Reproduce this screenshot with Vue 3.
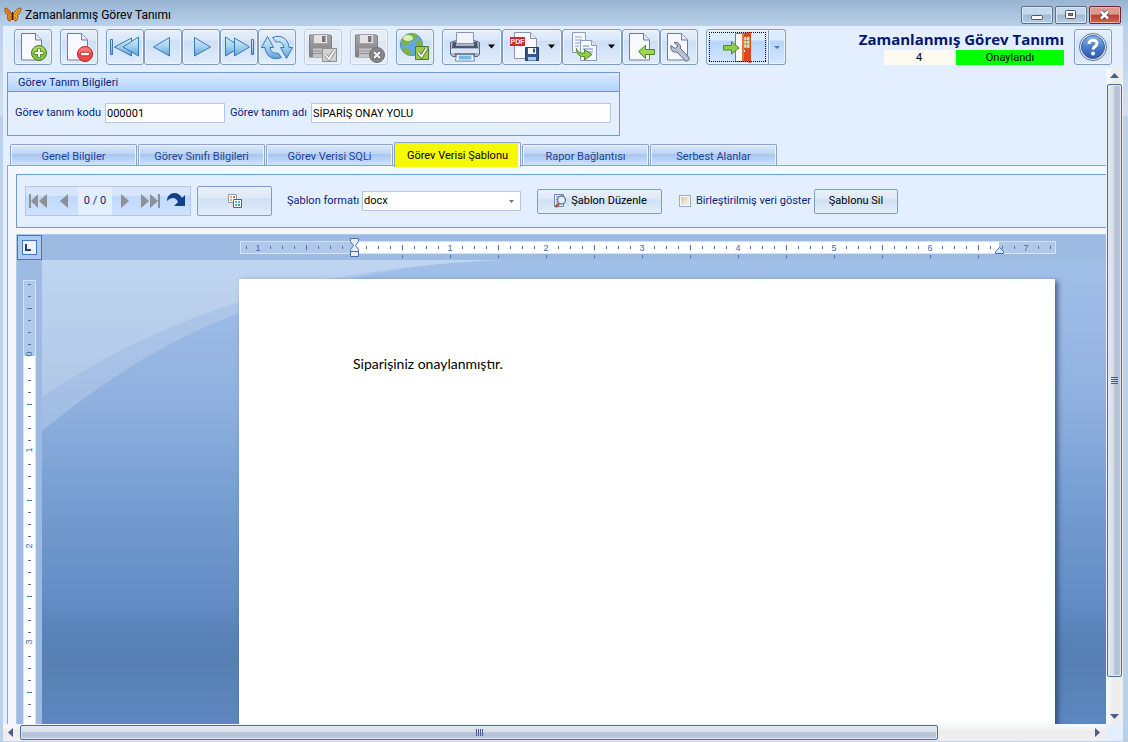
<script setup>
import { ref } from 'vue'

const code = ref('000001')
const name = ref('SİPARİŞ ONAY YOLU')
const format = ref('docx')
const merged = ref(false)
const activeTab = ref(3)

const tabs = [
  'Genel Bilgiler',
  'Görev Sınıfı Bilgileri',
  'Görev Verisi SQLi',
  'Görev Verisi Şablonu',
  'Rapor Bağlantısı',
  'Serbest Alanlar',
]

const groups = [
  [{ id: 'new', label: 'Yeni' }],
  [{ id: 'delete', label: 'Sil' }],
  [
    { id: 'first', label: 'İlk' },
    { id: 'prev', label: 'Önceki' },
    { id: 'next', label: 'Sonraki' },
    { id: 'last', label: 'Son' },
    { id: 'refresh', label: 'Yenile' },
  ],
  [{ id: 'save', label: 'Kaydet', disabled: true }],
  [{ id: 'cancel', label: 'Vazgeç', disabled: true }],
  [{ id: 'web', label: 'Onay' }],
  [
    { id: 'print', label: 'Yazdır', wide: true },
    { id: 'pdf', label: 'PDF kaydet', wide: true },
    { id: 'copy', label: 'Kopyala', wide: true },
    { id: 'import', label: 'Al' },
    { id: 'tools', label: 'Araçlar' },
  ],
]

// Ruler marks: 12 units apart, 96 units per inch, measured from the page margin.
function marks(from, to) {
  const list = []
  for (let i = from; i <= to; i++) {
    list.push({ pos: i * 12, num: i % 8 === 0, half: i % 8 !== 0 && i % 4 === 0, value: Math.abs(i / 8) })
  }
  return list
}
const across = marks(-9, 58).filter((m) => m.pos !== 0)
const below = Array.from({ length: 13 }, (_, i) => (i + 1) * 48)
const down = marks(-6, 31)
</script>

<template>
  <div class="window">
    <header class="titlebar">
      <svg class="logo" viewBox="0 0 18 16" aria-hidden="true">
        <path d="M8 8C6 3 3 1 1 1c-.5 3 .5 6 3 7-1 2-.5 5 1 6 2 0 3-2 3.500-5z" fill="#f08a1c" stroke="#8a3d0a" stroke-width=".8" />
        <path d="M9 8c2-5 5-7 8-7-.2 3-1 6-3.500 7 .8 2 0 5-1.500 6-2 0-2.500-2-3-5z" fill="#f5a52a" stroke="#8a3d0a" stroke-width=".8" />
        <path d="M3 3l3 5M15 3l-4 5M5 12l2-3M12 12l-2-3" stroke="#b3580f" stroke-width=".8" />
        <path d="M8.500 5v8" stroke="#3d2412" stroke-width="1.400" />
      </svg>
      <h1>Zamanlanmış Görev Tanımı</h1>
      <div class="sysbuttons">
        <button type="button" aria-label="Küçült"><svg viewBox="0 0 30 16"><rect x="9.500" y="8.500" width="11" height="4" rx="1" fill="#f8f8f8" stroke="#4d5560" /></svg></button>
        <button type="button" aria-label="Büyüt"><svg viewBox="0 0 30 16"><rect x="9.500" y="3.500" width="10" height="8" rx="1" fill="#f8f8f8" stroke="#4d5560" /><rect x="12.500" y="6.500" width="4" height="2" fill="#7d94b5" stroke="#4d5560" /></svg></button>
        <button type="button" class="close" aria-label="Kapat"><svg viewBox="0 0 30 16"><path d="M11 4.500l7 7M18 4.500l-7 7" stroke="#5a4048" stroke-width="4.400" /><path d="M11 4.500l7 7M18 4.500l-7 7" stroke="#fff" stroke-width="2.600" /></svg></button>
      </div>
    </header>

    <div class="client">
      <div class="toolbar">
        <div class="group" v-for="(g, gi) in groups" :key="gi">
          <button v-for="b in g" :key="b.id" type="button" class="tool" :class="{ wide: b.wide }" :disabled="b.disabled" :aria-label="b.label">
            <svg :viewBox="b.wide ? '1 1 58 34' : '1 1 36 34'">
              <defs v-if="b.id === 'first'">
                <linearGradient id="arrowfill" x1="0" y1="0" x2="0" y2="1"><stop offset="0" stop-color="#d3ecf8" /><stop offset=".5" stop-color="#a3d0ee" /><stop offset="1" stop-color="#5ca3dc" /></linearGradient>
                <linearGradient id="greyfill" x1="0" y1="0" x2="0" y2="1"><stop offset="0" stop-color="#a5a5a7" /><stop offset="1" stop-color="#808083" /></linearGradient>
              </defs>
              <g v-if="['new', 'delete', 'import', 'tools'].includes(b.id)">
                <path d="M7.500 4.500h14l6 6.500v20h-20z" fill="#f8f9ff" stroke="#74799f" />
                <path d="M21.500 4.500v6.500h6" fill="#e4e8f4" stroke="#74799f" />
              </g>
              <g v-if="b.id === 'new'">
                <circle cx="25" cy="24" r="7.500" fill="#86c440" stroke="#447a20" />
                <path d="M18.500 23a6.500 6 0 0 1 13 0z" fill="#b2dd72" opacity=".7" />
                <path d="M25 19.500v9M20.500 24h9" stroke="#4e8424" stroke-width="4" />
                <path d="M25 20v8M21 24h8" stroke="#fff" stroke-width="2.200" />
              </g>
              <g v-else-if="b.id === 'delete'">
                <circle cx="25" cy="25" r="7.500" fill="#f24747" stroke="#b42028" />
                <path d="M18.500 24a6.500 6 0 0 1 13 0z" fill="#fa8a86" opacity=".7" />
                <path d="M20.500 25h9" stroke="#b02a2a" stroke-width="4.500" />
                <path d="M21 25h8" stroke="#fff" stroke-width="2.600" />
              </g>
              <g v-else-if="b.id === 'first'" class="arrow">
                <path d="M4.500 10.500h2v15h-2z" /><path d="M8.500 18L25.500 9v18z" /><path d="M17 18l15.500-10v19z" />
              </g>
              <path v-else-if="b.id === 'prev'" class="arrow" d="M9.500 18L25.500 8.500v18.500z" />
              <path v-else-if="b.id === 'next'" class="arrow" d="M28.500 18L12.500 8.500v18.500z" />
              <g v-else-if="b.id === 'last'" class="arrow">
                <path d="M31.500 10.500h2v15h-2z" /><path d="M20.500 18L5.500 8v19z" /><path d="M29.500 18L14.500 9v18z" />
              </g>
              <g v-else-if="b.id === 'refresh'" class="arrow">
                <path d="M3.500 18.500L9.500 7.500l6 11h-3.500c.5 4 3.500 6.500 8 5.500l3.500 4.500c-8 3.500-16-1-16.500-10z" />
                <path d="M34.500 18.500L28.500 29.500l-6-11H26c-.5-4-3.500-6.500-8-5.500l-3.500-4.500c8-3.500 16 1 16.500 10z" />
              </g>
              <g v-else-if="b.id === 'save' || b.id === 'cancel'">
                <path d="M5.500 6h21l1 1v21h-22z" fill="url(#greyfill)" stroke="#818184" />
                <path d="M9.500 5.500h14v9h-14z" fill="#e3e3e5" stroke="#a2a2a4" />
                <path d="M18 7h3.500v6H18z" fill="#77777a" />
                <path d="M9 19.500h15V28H9z" fill="#c5c5c7" />
                <path d="M9 22h15M9 24.500h15" stroke="#8e8e90" />
                <g v-if="b.id === 'save'">
                  <path d="M18.500 19.500h14v13h-14z" fill="#d2d2d3" stroke="#8f8f91" />
                  <path d="M21.500 26l3.500 4 5-8" fill="none" stroke="#878789" stroke-width="3.400" />
                  <path d="M21.500 26l3.500 4 5-8" fill="none" stroke="#fff" stroke-width="1.800" />
                </g>
                <g v-else>
                  <circle cx="27" cy="26" r="7.500" fill="#87878a" stroke="#727275" />
                  <path d="M23.500 22.500l7 7M30.500 22.500l-7 7" stroke="#666" stroke-width="3.600" />
                  <path d="M24 23l6 6M30 23l-6 6" stroke="#f4f4f4" stroke-width="2.200" />
                </g>
              </g>
              <g v-else-if="b.id === 'web'">
                <circle cx="15.500" cy="15.500" r="11" fill="#62a8df" stroke="#4882b8" />
                <path d="M5 13C6 8 10 4.500 15 4.500c3 0 5 1 7 2.500l-3 4-5 1-2 4-4 1zM21 11l5 1c1 4 0 7-1 9l-5-4zM8 19l6 1 1 6c-4 0-7-2-9-5z" fill="#7cb342" />
                <ellipse cx="12" cy="9" rx="5" ry="3" fill="#f2ffd8" opacity=".8" />
                <path d="M19.500 17.500h13v13h-13z" fill="#9bcb4c" stroke="#4c7a25" />
                <path d="M22 23.500l3.500 4 5-8" fill="none" stroke="#4c6b2c" stroke-width="3.400" />
                <path d="M22 23.500l3.500 4 5-8" fill="none" stroke="#fff" stroke-width="1.800" />
              </g>
              <g v-else-if="b.id === 'print'">
                <path d="M8.500 13.500l5-2h19l5 2v12l-2 2h-25l-2-2z" fill="#a9b6ce" stroke="#57678c" />
                <path d="M11 13h3v4h18v-4h3l1 6H10z" fill="#4b556c" />
                <path d="M14.500 3.500h17v11h-17z" fill="#f0f3fa" stroke="#8b93ad" />
                <path d="M9 20h28v4H9z" fill="#dce3f1" />
                <path d="M13 24.500h20v2H13z" fill="#44506e" />
                <path d="M14.500 25.500h17l1 6.500h-19z" fill="#fff" stroke="#7181a4" />
                <path d="M16.500 26.500h13v4h-13z" fill="#71b9ec" />
              </g>
              <g v-else-if="b.id === 'pdf'">
                <path d="M12.500 3.500h16l6 6v20h-22z" fill="#f8f9ff" stroke="#8b92ad" />
                <path d="M28.500 3.500v6h6" fill="#e4e8f4" stroke="#8b92ad" />
                <path d="M8 8h15v9H8z" fill="#cc2a2e" />
                <text x="15.500" y="15" class="pdf-text">PDF</text>
                <path d="M23.500 18.500h13v13h-13z" fill="#33558c" stroke="#233c69" />
                <path d="M26 19h8v6h-8z" fill="#f4f7fc" /><path d="M31 19.500h2v4h-2z" fill="#33558c" />
                <path d="M26 28h8v3.500h-8z" fill="#a6cdea" />
              </g>
              <g v-else-if="b.id === 'copy'">
                <path d="M10.500 3.500h13v20h-13z" fill="#f6f8ff" stroke="#8b9bc4" />
                <path d="M13 8h7M13 11h7M13 14h7M13 17h4" stroke="#8aa0d4" />
                <path d="M18.500 11.500h11l5 5v15h-16z" fill="#f6f8ff" stroke="#8b9bc4" />
                <path d="M29.500 11.500v5h5" fill="#e0e6f6" stroke="#8b9bc4" />
                <path d="M21 17h6M21 20h10M24 23h7" stroke="#6d84c4" />
                <path d="M14.500 19.500c1 4 4 5 8 4.500v-3.500l7.500 5-7.500 5.500v-3.500c-5 .5-8-2-8-8z" fill="#8fce48" stroke="#4e8a28" />
              </g>
              <path v-else-if="b.id === 'import'" d="M16.500 22.500l7-6v4h9v5h-9v4z" fill="#9ad458" stroke="#4e8a28" />
              <path v-else-if="b.id === 'tools'" d="M14 13.500c4-1 7 2 6.500 6l8 8.500c2 2-1 5.500-3.500 3.500l-8-8.500c-4 1-7-2-6-6.500l4 3 3-2.500z" fill="#b9c2d4" stroke="#596681" />
              <path v-if="b.wide" d="M46 15.500h7l-3.500 4z" fill="#000" />
            </svg>
          </button>
        </div>
        <div class="group">
          <button type="button" class="tool exit" aria-label="Çıkış">
            <svg viewBox="1 1 61 34">
              <path d="M29.500 4.500h9v28h-9z" fill="#fff" stroke="#d85a32" />
              <path d="M36 4l9-1v31l-9-2z" fill="#d9481f" /><path d="M36 4h2v29l-2-1z" fill="#e8703c" />
              <path d="M38 8h5.500v11H38z" fill="#f4e6b8" stroke="#a89a70" stroke-width=".6" />
              <path d="M40.700 8v11M38 11.500h5.500M38 15h5.500" stroke="#8f8766" stroke-width=".8" />
              <path d="M38.500 21v2" stroke="#fff" />
              <path d="M17.500 16.500h8v-4l7.500 6.500-7.500 6v-4h-8z" fill="#8fce48" stroke="#4e8a28" />
              <path d="M3 3.500h57M3 32.500h57M3.500 3v30M59.500 3v30" fill="none" stroke="#000" stroke-dasharray="1 1" />
            </svg>
          </button>
          <button type="button" class="tool drop" aria-label="Çıkış seçenekleri"><svg viewBox="0 0 16 34"><path d="M5 16h6l-3 3z" fill="#4a7bb5" /></svg></button>
        </div>

        <div class="status">
          <h2>Zamanlanmış Görev Tanımı</h2>
          <div class="status-row"><span class="count">4</span><span class="approved">Onaylandı</span></div>
        </div>
        <button type="button" class="tool help" aria-label="Yardım">
          <svg viewBox="1 1 36 34">
            <defs><linearGradient id="helpfill" x1="0" y1="0" x2="0" y2="1"><stop offset="0" stop-color="#8fb5ea" /><stop offset=".5" stop-color="#4b7fcf" /><stop offset="1" stop-color="#2b57a8" /></linearGradient></defs>
            <circle cx="19" cy="18" r="13.500" fill="#e8eefa" stroke="#5d7196" />
            <circle cx="19" cy="18" r="11.500" fill="url(#helpfill)" stroke="#3660a8" />
            <path d="M15 15c0-5 8-5 8-.5 0 3-4 3-4 6" fill="none" stroke="#fff" stroke-width="3" />
            <circle cx="19" cy="24.500" r="2" fill="#fff" />
          </svg>
        </button>
      </div>

      <div class="body">
        <main class="content">
          <section class="info">
            <h3>Görev Tanım Bilgileri</h3>
            <div class="fields">
              <label for="code">Görev tanım kodu</label>
              <input id="code" v-model="code" type="text" class="code" />
              <label for="name">Görev tanım adı</label>
              <input id="name" v-model="name" type="text" class="name" />
            </div>
          </section>

          <nav class="tabs" role="tablist">
            <button v-for="(t, i) in tabs" :key="t" type="button" role="tab" :aria-selected="i === activeTab" :class="{ active: i === activeTab }" @click="activeTab = i">{{ t }}</button>
          </nav>

          <div class="tabpage">
            <div class="panel">
              <div class="navigator">
                <button type="button" aria-label="İlk kayıt"><svg viewBox="0 0 26 28"><path d="M3 7h2v14H3zM12 7v14L5 14zM21 7v14l-8-7z" /></svg></button>
                <button type="button" aria-label="Önceki kayıt"><svg viewBox="0 0 26 28"><path d="M16 7v14l-8-7z" /></svg></button>
                <span>0 / 0</span>
                <button type="button" aria-label="Sonraki kayıt"><svg viewBox="0 0 26 28"><path d="M9 7v14l8-7z" /></svg></button>
                <button type="button" aria-label="Son kayıt"><svg viewBox="0 0 26 28"><path d="M3 7v14l8-7zM12 7v14l8-7zM20 7h2v14h-2z" /></svg></button>
                <button type="button" aria-label="Kayda git"><svg viewBox="0 0 26 28"><path d="M3 14c0-9 11-11 15-3l3-3v11H10l4-4c-2-5-7-5-11-1z" fill="#143f8a" /></svg></button>
              </div>
              <button type="button" class="btn fields-btn" aria-label="Alanlar">
                <svg viewBox="0 0 16 16">
                  <path d="M1.500 1.500h8v8h-8z" fill="#fff" stroke="#8c98bd" /><path d="M3 3h2v2H3z" fill="#f6a93c" /><path d="M6 3h2v2H6z" fill="#ee6a3c" /><path d="M3 6h2v2H3z" fill="#f7b733" />
                  <path d="M6.500 6.500h8v8h-8z" fill="#fff" stroke="#4a62a8" /><path d="M8 8h2v2H8zM11 8h2v2h-2z" fill="#6fa4ee" /><path d="M8 11h2v2H8z" fill="#49b7b0" /><path d="M11 11h2v2h-2z" fill="#58a62c" />
                </svg>
              </button>
              <label for="format" class="format-label">Şablon formatı</label>
              <div class="select">
                <select id="format" v-model="format"><option>docx</option><option>html</option></select>
                <svg viewBox="0 0 5 3" aria-hidden="true"><path d="M0 0h5L2.500 3z" fill="#4a7bb5" /></svg>
              </div>
              <button type="button" class="btn edit">
                <svg viewBox="0 0 16 16" aria-hidden="true">
                  <path d="M2.500 1.500h9v12h-9z" fill="#e8f1fc" stroke="#6688b5" /><path d="M4 4h4M4 6.500h3M4 9h2" stroke="#6f95cb" />
                  <path d="M7 10.500L3.500 14" stroke="#a85a32" stroke-width="2.600" /><circle cx="9.500" cy="7" r="4" fill="#e2f1fd" stroke="#687a96" stroke-width="1.400" />
                </svg>Şablon Düzenle
              </button>
              <label class="check"><input v-model="merged" type="checkbox" />Birleştirilmiş veri göster</label>
              <button type="button" class="btn remove">Şablonu Sil</button>
            </div>

            <div class="editor">
              <div class="corner"><svg viewBox="0 0 15 15" aria-hidden="true"><rect x=".5" y=".5" width="14" height="14" fill="#eaf1fc" stroke="#4575c9" /><path d="M4 4v6h5" fill="none" stroke="#2b3e63" stroke-width="2" /></svg></div>
              <div class="ruler-x">
                <svg viewBox="0 0 818 26">
                  <rect x=".5" y="6.500" width="815" height="12" fill="#b0c9eb" stroke="#d5e3f6" />
                  <rect x="115" y="7" width="644" height="11" fill="#fff" />
                  <template v-for="m in across" :key="m.pos">
                    <text v-if="m.num" :x="114 + m.pos" y="16">{{ m.value }}</text>
                    <path v-else :d="`M${114 + m.pos + 0.5} ${m.half ? 10 : 11}v${m.half ? 5 : 3}`" stroke="#4a74ab" />
                  </template>
                  <path v-for="p in below" :key="p" :d="`M${114 + p + 0.5} 20v3`" stroke="#4a74ab" />
                  <path d="M110.500 3.500h8v3l-3 4 3 4v2h-8v-2l3-4-3-4zM110.500 16.500h8v5h-8z" fill="#e6edf8" stroke="#4472ae" />
                  <path d="M755.500 18.500v-2l4-4 4 4v2z" fill="#dce4f1" stroke="#4472ae" />
                </svg>
              </div>
              <div class="ruler-y">
                <svg viewBox="0 0 25 464">
                  <path d="M6.500 480V20.500h12V480" fill="#fff" stroke="#d5e3f6" />
                  <path d="M7 21h11v75H7z" fill="#b0c9eb" />
                  <template v-for="m in down" :key="m.pos">
                    <text v-if="m.num" :transform="`translate(15 ${94 + m.pos}) rotate(-90)`">{{ m.value }}</text>
                    <path v-else :d="`M${m.half ? 10 : 11} ${96 + m.pos + 0.5}h${m.half ? 5 : 3}`" stroke="#4a74ab" />
                  </template>
                </svg>
              </div>
              <div class="canvas">
                <svg class="waves" viewBox="0 0 1064 464" preserveAspectRatio="xMinYMin slice" aria-hidden="true">
                  <defs><linearGradient id="sky" gradientUnits="userSpaceOnUse" x1="0" y1="0" x2="0" y2="170"><stop offset="0" stop-color="#bfd5f0" /><stop offset="1" stop-color="#adc4e5" /></linearGradient></defs>
                  <path d="M0 0h460C360 2 270 25 197 53 125 80 60 122 0 171z" fill="#d3e0f2" opacity=".3" />
                  <path d="M0 0h460C350 4 255 23 197 42 120 67 60 97 0 137z" fill="url(#sky)" />
                </svg>
                <article class="page">Siparişiniz onaylanmıştır.</article>
              </div>
            </div>
          </div>
        </main>
        <div class="vbar">
          <button type="button" aria-label="Yukarı"><svg viewBox="0 0 15 16"><path d="M3 10h9L7.500 5z" /></svg></button>
          <div class="vthumb"><i></i></div>
          <div class="vrest"></div>
          <button type="button" aria-label="Aşağı"><svg viewBox="0 0 15 16"><path d="M3 6h9l-4.500 5z" /></svg></button>
        </div>
      </div>
      <div class="hbar">
        <button type="button" aria-label="Sola"><svg viewBox="0 0 16 16"><path d="M10 3v9L5 7.500z" /></svg></button>
        <div class="hthumb"><i></i></div>
        <div class="hrest"></div>
        <button type="button" aria-label="Sağa"><svg viewBox="0 0 16 16"><path d="M6 3v9l5-4.500z" /></svg></button>
      </div>
    </div>
  </div>
</template>

<style>
body { background: #b9d1ea; }
</style>

<style scoped>
* { box-sizing: border-box; }
button, input, select { font: inherit; color: inherit; margin: 0; padding: 0; }
h1, h2, h3 { margin: 0; font-weight: normal; font-size: inherit; }
svg { display: block; }
.window {
  height: 100vh;
  display: flex;
  flex-direction: column;
  padding: 0 5px 1px 3px;
  overflow: hidden;
  background: linear-gradient(#98b4d1 0, #b9d1ea 26px, #cfe0f4 115px, #b9d1ea 117px);
  font-family: Roboto, "Noto Sans", sans-serif;
  font-size: 11px;
  line-height: 14px;
  color: #0a1f7c;
}
.titlebar { flex: none; height: 26px; display: flex; align-items: center; gap: 3px; padding: 3px 2px 0 1px; }
.logo { width: 18px; height: 16px; }
.titlebar h1 { flex: 1; font: 12px/16px Roboto, "Noto Sans", sans-serif; color: #000; }
.sysbuttons { display: flex; gap: 2px; }
.sysbuttons button { width: 32px; height: 18px; border: 1px solid #5a6f88; border-radius: 2px; background: linear-gradient(#c6d8eb 45%, #9fb8d3 50%, #b8cfe8); box-shadow: inset 0 0 0 1px #dbe7f4; }
.sysbuttons .close { border-color: #6b2730; background: linear-gradient(#dd9a90 45%, #b8402c 50%, #cb6a50); box-shadow: inset 0 0 0 1px #e8b4aa; }
.sysbuttons svg { width: 30px; height: 16px; }
.client { flex: 1; min-height: 0; display: flex; flex-direction: column; background: #e3eeff; }

.toolbar { flex: none; height: 42px; display: flex; align-items: flex-start; gap: 8px; padding: 3px 11px 0; }
.group { display: flex; }
.tool { width: 38px; height: 36px; border: 1px solid #7f9dc6; border-radius: 3px; background: linear-gradient(#e6effb 0, #dbe7f7 30%, #cddff5 32%, #e0ecfb 100%); box-shadow: inset 0 0 0 1px #eff5fd; overflow: hidden; }
.tool svg { width: 100%; height: 34px; }
.tool.wide { width: 60px; }
.tool:disabled { border-color: #c0cfe4; background: linear-gradient(#e6edf7 30%, #dce6f3 32%, #e4edf8); }
.tool.exit { width: 63px; background: linear-gradient(#dcecff 30%, #b7d5fb 32%, #d4e7ff); border-radius: 3px 0 0 3px; }
.tool.drop { width: 17px; border-left: 0; background: linear-gradient(#dcecff 30%, #b7d5fb 32%, #d4e7ff); border-radius: 0 3px 3px 0; }
.arrow { fill: url(#arrowfill); stroke: #3b79b5; stroke-linejoin: round; }
.pdf-text { font: bold 7px "Liberation Sans", sans-serif; fill: #fff; text-anchor: middle; }
.status { margin-left: auto; display: flex; flex-direction: column; align-items: flex-end; }
.status h2 { font: bold 15px/21px "Open Sans", "Noto Sans", sans-serif; color: #02176d; white-space: nowrap; }
.status-row { display: flex; gap: 2px; color: #000; text-align: center; line-height: 15px; }
.count { width: 70px; background: #fffaf0; }
.approved { width: 108px; background: #0f0; }
.help { margin-left: 2px; }

.body { flex: 1; min-height: 0; display: flex; }
.content { flex: 1; min-width: 0; display: flex; flex-direction: column; padding: 4px 0 0 4px; overflow: hidden; }
.info { flex: none; width: 613px; height: 64px; border: 1px solid #6d9ad3; }
.info h3 { height: 19px; padding-left: 10px; line-height: 19px; border-bottom: 1px solid #6d9ad3; background: linear-gradient(#dceaff, #b2d3ff); }
.fields { display: flex; align-items: center; gap: 5px; padding: 11px 8px 0 7px; }
.fields label { white-space: nowrap; }
.fields input { height: 20px; padding: 0 1px; border: 1px solid #b3c8e6; background: #fff; color: #000; outline: 0; }
.fields .code { width: 120px; }
.fields .name { width: 300px; }
.fields label:first-child { width: 85px; }
.fields label:nth-of-type(2) { width: 76px; }

.tabs { flex: none; display: flex; align-items: flex-end; gap: 1px; padding: 6px 0 0 3px; height: 29px; }
.tabs button { width: 127px; height: 21px; padding: 3px 0 0; border: 1px solid #8ba4cd; border-bottom: 0; border-radius: 2px 2px 0 0; background: linear-gradient(#dbe9fb 0, #c0d6f5 42%, #a6c6f0 48%, #cfe2fb 100%); box-shadow: inset 1px 1px 0 #edf4fe, inset -1px 0 0 #edf4fe; color: #1d4391; }
.tabs button.active { position: relative; height: 25px; margin-bottom: -2px; padding: 1px 0 0; background: linear-gradient(#f5fa00, #f5fa00) no-repeat 0 0 / 123px 100% #f3f8ff; box-shadow: none; color: #000; }
.tabpage { flex: 1; min-height: 0; display: flex; flex-direction: column; border: solid #8ba4cd; border-width: 1px 0 0 1px; background: #f3f8ff; padding: 8px 0 0 8px; }
.panel { flex: none; height: 54px; display: flex; align-items: center; border: solid #6d9ad3; border-width: 1px 0 1px 1px; background: #e3eeff; padding-left: 8px; white-space: nowrap; }
.navigator { display: flex; align-items: center; width: 166px; height: 30px; border: 1px solid #b3c8e6; background: linear-gradient(#d7e6fd 30%, #bed9ff 33%, #cfe2fc); }
.navigator button { width: 26px; height: 28px; border: 0; background: none; }
.navigator svg { width: 26px; height: 28px; fill: #8d9095; }
.navigator span { flex: 1; line-height: 28px; background: #e3eeff; text-align: center; }
.btn { height: 25px; display: flex; align-items: center; justify-content: center; gap: 3px; border: 1px solid #7f9dc6; border-radius: 2px; background: linear-gradient(#e8f0fb 0, #dfe9f6 38%, #cfdff3 42%, #e4eefb 100%); color: #000; }
.btn svg { width: 16px; height: 16px; }
.fields-btn { width: 75px; height: 30px; margin: 0 15px 0 6px; }
.format-label { width: 70px; }
.select { position: relative; width: 159px; margin: 0 16px 0 5px; }
.select select { display: block; width: 100%; height: 20px; padding: 0 1px; appearance: none; border: 1px solid #b3c8e6; border-radius: 0; background: #fff; color: #000; outline: 0; }
.select svg { position: absolute; right: 7px; top: 9px; width: 5px; height: 3px; pointer-events: none; }
.edit { width: 125px; margin-right: 17px; }
.check { display: flex; align-items: center; gap: 5px; width: 126px; margin-right: 9px; }
.check input { flex: none; width: 12px; height: 12px; appearance: none; border: 1px solid #93acd0; background: linear-gradient(135deg, #cdc5ae, #fffdf6); box-shadow: inset 0 0 0 1px #fff; }
.remove { width: 84px; }

.editor { flex: 1; min-height: 0; margin-top: 6px; display: grid; grid-template: 25px 1fr / 25px 1fr; background: #9cbae2; border: solid #b0c8e8; border-width: 1px 0 0 1px; overflow: hidden; }
.corner { width: 25px; height: 25px; border: 1px solid #4575c9; background: #adc9ef; display: grid; place-items: center; }
.corner svg { width: 15px; height: 15px; }
.ruler-x { overflow: hidden; padding-left: 198px; }
.ruler-x svg { width: 818px; height: 26px; }
.ruler-y { overflow: hidden; min-height: 0; }
.ruler-y svg { width: 25px; height: 464px; }
.editor text { font: 9px "Liberation Sans", sans-serif; fill: #3e6cab; text-anchor: middle; }
.canvas { position: relative; min-height: 0; padding: 19px 0 0 197px; overflow: hidden; background: linear-gradient(#a0c0e9 0, #9ab9e5 60px, #8fb0de 145px, #7ba2d5 220px, #6f97cc 275px, #648ec6 335px, #5982b8 375px, #5880b4 405px, #5d87bf 464px); }
.waves { position: absolute; inset: 0; width: 1064px; height: 464px; }
.page { position: relative; width: 816px; height: 1056px; padding: 75px 114px 0; background: #fff; color: #000; font: 14px/20px Lato, sans-serif; box-shadow: 3px 2px 5px rgba(20, 45, 85, .6); }

.vbar { flex: none; width: 17px; display: flex; flex-direction: column; border-left: 1px solid #eef4fd; background: linear-gradient(90deg, #fafafa, #ececec 40%, #f0f0f0); }
.vbar button { flex: none; height: 16px; border: 0; background: none; }
.vbar svg { width: 15px; height: 16px; }
.vbar svg, .hbar svg { fill: #4a5c8c; }
.vthumb { flex: 592; display: grid; place-items: center; width: 15px; border: 1px solid #536999; border-radius: 2px; background: linear-gradient(90deg, #e6eaf0, #d5dde7 45%, #b2c1d5 52%, #b9c8dd); box-shadow: inset 0 0 0 1px #e2e9f3; }
.vthumb i { width: 7px; height: 7px; background: repeating-linear-gradient(#4a5c8c 0 1px, transparent 1px 2px); }
.vrest { flex: 31; }
.hbar { flex: none; height: 17px; display: flex; margin-right: 17px; border-top: 1px solid #eef4fd; background: linear-gradient(#fafafa, #ececec 40%, #f0f0f0); }
.hbar button { flex: none; width: 17px; border: 0; background: none; }
.hbar svg { width: 16px; height: 16px; }
.hthumb { flex: 918; display: grid; place-items: center; height: 15px; border: 1px solid #536999; border-radius: 2px; background: linear-gradient(#e6eaf0, #d5dde7 45%, #b2c1d5 52%, #b9c8dd); box-shadow: inset 0 0 0 1px #e2e9f3; }
.hthumb i { width: 7px; height: 7px; background: repeating-linear-gradient(90deg, #4a5c8c 0 1px, transparent 1px 2px); }
.hrest { flex: 151; }
</style>
